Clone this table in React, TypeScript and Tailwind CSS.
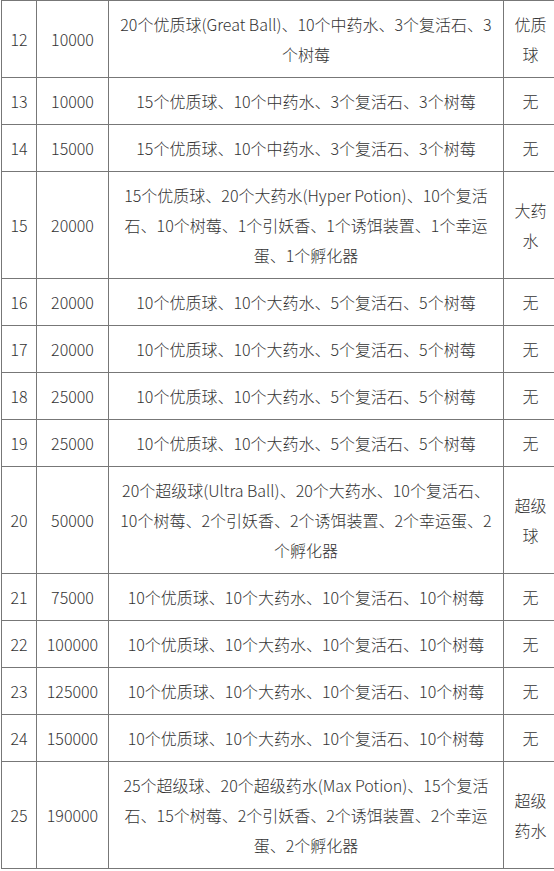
import React from "react";

type Row = { lv: string; xp: string; items: string[]; extra: string[] };

const rows: Row[] = [
  { lv: "12", xp: "10000", items: ["20个优质球(Great Ball)、10个中药水、3个复活石、3", "个树莓"], extra: ["优质", "球"] },
  { lv: "13", xp: "10000", items: ["15个优质球、10个中药水、3个复活石、3个树莓"], extra: ["无"] },
  { lv: "14", xp: "15000", items: ["15个优质球、10个中药水、3个复活石、3个树莓"], extra: ["无"] },
  { lv: "15", xp: "20000", items: ["15个优质球、20个大药水(Hyper Potion)、10个复活", "石、10个树莓、1个引妖香、1个诱饵装置、1个幸运", "蛋、1个孵化器"], extra: ["大药", "水"] },
  { lv: "16", xp: "20000", items: ["10个优质球、10个大药水、5个复活石、5个树莓"], extra: ["无"] },
  { lv: "17", xp: "20000", items: ["10个优质球、10个大药水、5个复活石、5个树莓"], extra: ["无"] },
  { lv: "18", xp: "25000", items: ["10个优质球、10个大药水、5个复活石、5个树莓"], extra: ["无"] },
  { lv: "19", xp: "25000", items: ["10个优质球、10个大药水、5个复活石、5个树莓"], extra: ["无"] },
  { lv: "20", xp: "50000", items: ["20个超级球(Ultra Ball)、20个大药水、10个复活石、", "10个树莓、2个引妖香、2个诱饵装置、2个幸运蛋、2", "个孵化器"], extra: ["超级", "球"] },
  { lv: "21", xp: "75000", items: ["10个优质球、10个大药水、10个复活石、10个树莓"], extra: ["无"] },
  { lv: "22", xp: "100000", items: ["10个优质球、10个大药水、10个复活石、10个树莓"], extra: ["无"] },
  { lv: "23", xp: "125000", items: ["10个优质球、10个大药水、10个复活石、10个树莓"], extra: ["无"] },
  { lv: "24", xp: "150000", items: ["10个优质球、10个大药水、10个复活石、10个树莓"], extra: ["无"] },
  { lv: "25", xp: "190000", items: ["25个超级球、20个超级药水(Max Potion)、15个复活", "石、15个树莓、2个引妖香、2个诱饵装置、2个幸运", "蛋、2个孵化器"], extra: ["超级", "药水"] },
];

function Lines({ lines }: { lines: string[] }) {
  return (
    <>
      {lines.map((l, i) => (
        <React.Fragment key={i}>
          {i > 0 && <br />}
          {l}
        </React.Fragment>
      ))}
    </>
  );
}

export default function App() {
  const td = "border border-[#777777] px-0 py-[8px] text-center align-middle";
  return (
    <div className="w-[554px] overflow-hidden bg-white">
      <div className="pl-[1px]">
        <table
          className="w-[556px] table-fixed border-collapse text-[16px] font-light leading-[30px] text-[#333333]"
          style={{ fontFamily: '"Noto Sans CJK SC", "Noto Sans", sans-serif' }}
        >
          <colgroup>
            <col className="w-[35px]" />
            <col className="w-[72px]" />
            <col className="w-[395px]" />
            <col className="w-[54px]" />
          </colgroup>
          <tbody>
            {rows.map((r, i) => (
              <tr key={i}>
                <td className={td}>{r.lv}</td>
                <td className={td}>{r.xp}</td>
                <td className={td + " px-[6px]"}>
                  <Lines lines={r.items} />
                </td>
                <td className={td}>
                  <Lines lines={r.extra} />
                </td>
              </tr>
            ))}
          </tbody>
        </table>
      </div>
    </div>
  );
}
